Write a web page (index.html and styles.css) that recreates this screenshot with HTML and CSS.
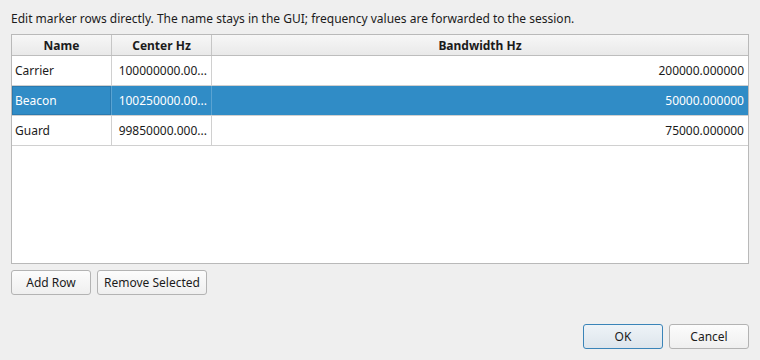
FILE: index.html
```html
<!DOCTYPE html>
<html>
<head>
<meta charset="utf-8">
<link rel="stylesheet" href="styles.css">
</head>
<body>
<div class="dialog">
  <div class="intro">Edit marker rows directly. The name stays in the GUI; frequency values are forwarded to the session.</div>
  <div class="table">
    <div class="row head">
      <div class="cell">Name</div>
      <div class="cell">Center Hz</div>
      <div class="cell">Bandwidth Hz</div>
    </div>
    <div class="row">
      <div class="cell name">Carrier</div>
      <div class="cell num">100000000.00...</div>
      <div class="cell num">200000.000000</div>
    </div>
    <div class="row selected">
      <div class="cell name focus">Beacon</div>
      <div class="cell num">100250000.00...</div>
      <div class="cell num">50000.000000</div>
    </div>
    <div class="row">
      <div class="cell name">Guard</div>
      <div class="cell num">99850000.000...</div>
      <div class="cell num">75000.000000</div>
    </div>
  </div>
  <div class="actions">
    <button class="btn w80">Add Row</button>
    <button class="btn w110">Remove Selected</button>
  </div>
  <div class="dialog-buttons">
    <button class="btn w80 default">OK</button>
    <button class="btn w80">Cancel</button>
  </div>
</div>
</body>
</html>
```
FILE: styles.css
```css
* { box-sizing: border-box; }
html, body {
  margin: 0;
  padding: 0;
  background: #efefef;
}
body {
  font-family: "Noto Sans", "Open Sans", sans-serif;
  font-size: 12px;
  color: #1b1b1b;
}
.dialog {
  width: 760px;
  height: 360px;
  padding: 11px 11px 11px 11px;
  display: flex;
  flex-direction: column;
}
.intro {
  height: 16px;
  line-height: 16px;
  margin-bottom: 7px;
  white-space: nowrap;
}
.table {
  width: 738px;
  height: 230px;
  border: 1px solid #b9b9b9;
  background: #ffffff;
  flex: none;
}
.row {
  display: grid;
  grid-template-columns: 100px 100px 1fr;
  height: 30px;
  border-bottom: 1px solid #d0d0d0;
}
.row.head {
  height: 21px;
  border-bottom: 1px solid #bdbdbd;
  background: linear-gradient(#f7f7f7, #e9e9e9);
}
.cell {
  border-right: 1px solid #d0d0d0;
  padding: 0 3px;
  display: flex;
  align-items: center;
  white-space: nowrap;
  overflow: hidden;
}
.cell:last-child { border-right: none; }
.head .cell {
  justify-content: center;
  font-weight: bold;
  border-right-color: #c6c6c6;
}
.num {
  justify-content: flex-end;
  padding-right: 4px;
}
.selected {
  background: #308cc6;
  color: #ffffff;
}
.selected .cell { border-right-color: #5aa3d2; }
.selected .focus {
  box-shadow: inset 0 0 0 1px #2a7ab0;
}
.actions {
  display: flex;
  gap: 6px;
  margin-top: 6px;
}
.btn {
  font-family: inherit;
  font-size: 12px;
  color: #1b1b1b;
  height: 25px;
  padding: 0;
  border: 1px solid #b3b3b3;
  border-radius: 3px;
  background: linear-gradient(#fcfcfc, #efefef);
}
.w80 { width: 80px; }
.w110 { width: 110px; }
.dialog-buttons {
  margin-top: auto;
  display: flex;
  justify-content: flex-end;
  gap: 6px;
}
.btn.default {
  border-color: #3a84b8;
  background: linear-gradient(#eef3f7, #dde5ec);
}
```
